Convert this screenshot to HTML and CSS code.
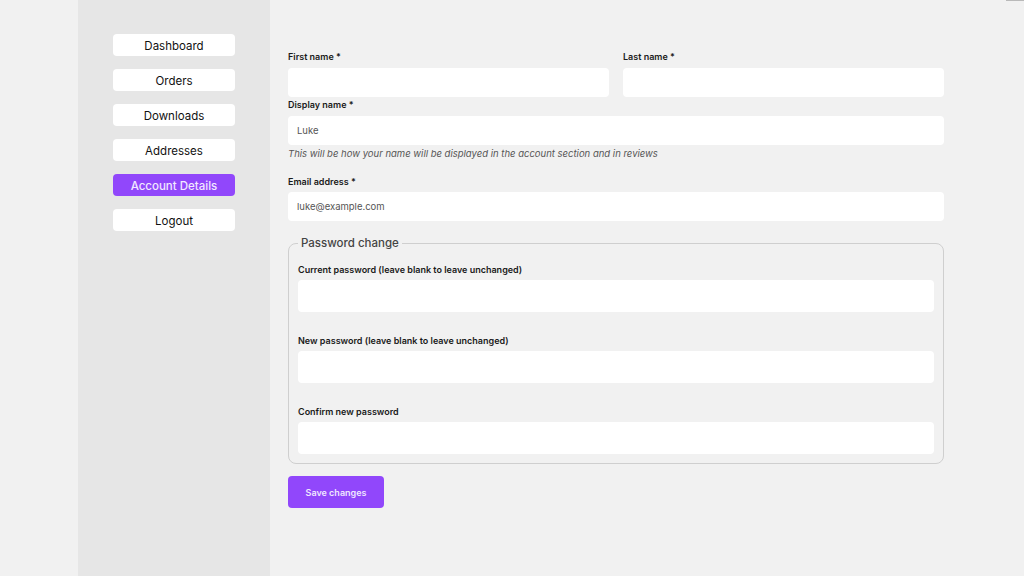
FILE: index.html
```html
<!DOCTYPE html>
<html lang="en">
<head>
<meta charset="utf-8">
<title>Account Details</title>
<link rel="stylesheet" href="styles.css">
</head>
<body>
<div class="scroll-mark"></div>
<div class="page">
  <div class="gutter"></div>
  <nav class="sidebar">
    <a class="nav-btn">Dashboard</a>
    <a class="nav-btn">Orders</a>
    <a class="nav-btn">Downloads</a>
    <a class="nav-btn">Addresses</a>
    <a class="nav-btn active">Account Details</a>
    <a class="nav-btn">Logout</a>
  </nav>
  <main class="main">
    <form class="form">
      <div class="row">
        <div class="field">
          <label class="label">First name *</label>
          <div class="input"></div>
        </div>
        <div class="field">
          <label class="label">Last name *</label>
          <div class="input"></div>
        </div>
      </div>
      <div class="field display">
        <label class="label">Display name *</label>
        <div class="input">Luke</div>
        <p class="help">This will be how your name will be displayed in the account section and in reviews</p>
      </div>
      <div class="field email">
        <label class="label">Email address *</label>
        <div class="input">luke@example.com</div>
      </div>
      <fieldset class="pw">
        <legend class="legend">Password change</legend>
        <div class="pw-field">
          <label class="label">Current password (leave blank to leave unchanged)</label>
          <div class="input tall"></div>
        </div>
        <div class="pw-field">
          <label class="label">New password (leave blank to leave unchanged)</label>
          <div class="input tall"></div>
        </div>
        <div class="pw-field">
          <label class="label">Confirm new password</label>
          <div class="input tall"></div>
        </div>
      </fieldset>
      <button type="button" class="save">Save changes</button>
    </form>
  </main>
</div>
</body>
</html>
```

FILE: styles.css
```css
* { box-sizing: border-box; }
html, body {
  margin: 0;
  padding: 0;
  background: #f1f1f1;
  font-family: Inter, "Liberation Sans", sans-serif;
  color: #1e1e1e;
}
.scroll-mark {
  position: absolute;
  top: 0;
  right: 0;
  width: 18px;
  height: 1px;
  background: #b9b9b9;
}
.page {
  display: flex;
  min-height: 576px;
}
.gutter { width: 78px; flex: none; }
.sidebar {
  width: 192px;
  flex: none;
  background: #e6e6e6;
  padding: 34px 0 0 35px;
  display: flex;
  flex-direction: column;
  gap: 13px;
}
.nav-btn {
  display: flex;
  align-items: center;
  justify-content: center;
  width: 122px;
  height: 22px;
  padding-top: 2px;
  background: #ffffff;
  border-radius: 4px;
  font-size: 11.5px;
  color: #111;
}
.nav-btn.active {
  background: #9147fb;
  color: #f1e9ff;
  font-weight: 500;
}
.main {
  padding: 50px 0 0 18px;
}
.form {
  width: 656px;
  display: flex;
  flex-direction: column;
}
.row {
  display: flex;
  gap: 14px;
}
.row .field { flex: 1; }
.label {
  display: block;
  font-size: 9px;
  line-height: 12px;
  padding-top: 1px;
  font-weight: 600;
  color: #1a1a1a;
  margin-bottom: 5px;
}
.input {
  height: 29px;
  background: #ffffff;
  border-radius: 4px;
  padding-left: 9px;
  display: flex;
  align-items: center;
  font-size: 9.5px;
  color: #555;
}
.input.tall { height: 32px; }
.display { margin-top: 1px; }
.help {
  margin: 3px 0 0;
  font-size: 9.5px;
  line-height: 12px;
  font-style: italic;
  color: #555;
}
.email { margin-top: 15px; }
.email .label { margin-bottom: 4px; }
.pw {
  margin: 15px 0 0;
  border: 1px solid #cfcfcf;
  border-radius: 8px;
  padding: 13px 9px 9px 9px;
  min-width: 0;
}
.legend {
  padding: 0 3px;
  font-size: 11.5px;
  line-height: 14px;
  font-weight: 500;
  color: #444;
}
.pw-field .label { margin-bottom: 4px; }
.pw-field + .pw-field { margin-top: 22px; }
.save {
  margin-top: 12px;
  width: 96px;
  height: 32px;
  border: none;
  border-radius: 4px;
  background: #9147fb;
  color: #efe6ff;
  font-family: Inter, "Liberation Sans", sans-serif;
  font-size: 9px;
  font-weight: 600;
  padding: 0;
}
```
